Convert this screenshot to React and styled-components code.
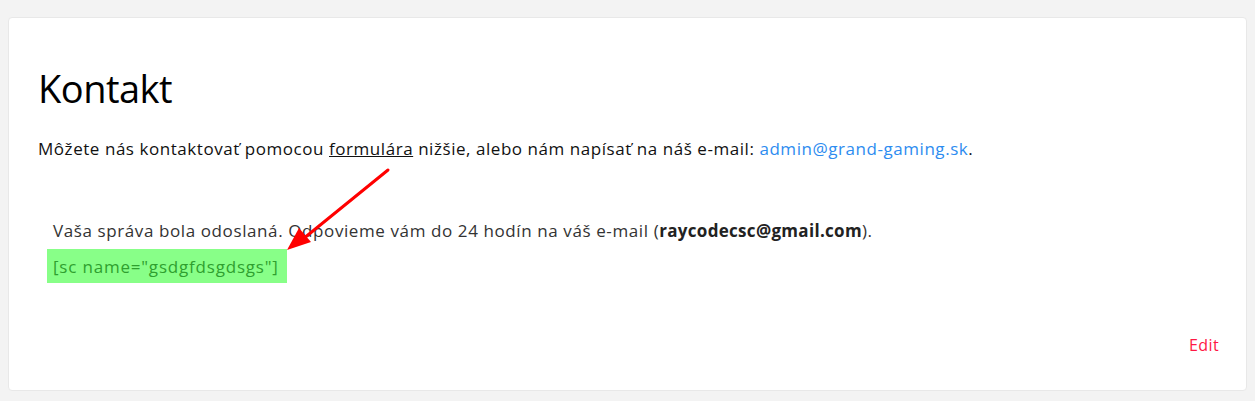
import React from "react";
import styled, { createGlobalStyle } from "styled-components";

const Global = createGlobalStyle`
  html, body { margin: 0; padding: 0; background: #f3f3f3; }
  body { font-family: "Open Sans", "Lato", sans-serif; }
`;

const Page = styled.div`
  padding: 17px 8px 10px 8px;
`;

const Card = styled.article`
  position: relative;
  background: #fff;
  border: 1px solid #e8e8e8;
  border-radius: 4px;
  height: 374px;
  box-sizing: border-box;
  padding: 44px 27px 0 29px;
  display: flex;
  flex-direction: column;
`;

const Title = styled.h1`
  margin: 0;
  font-family: "Open Sans", sans-serif;
  font-weight: 500;
  font-size: 38px;
  line-height: 52px;
  color: #000;
  letter-spacing: -0.5px;
`;

const Lead = styled.p`
  margin: 22px 0 0 0;
  font-size: 17px;
  line-height: 26px;
  color: #111;
  letter-spacing: 0.55px;
`;

const FormLink = styled.a`
  color: #111;
  text-decoration: underline;
`;

const MailLink = styled.a`
  color: #2d8cf0;
  text-decoration: none;
`;

const Notice = styled.div`
  margin-top: 56px;
  padding-left: 9px;
  display: flex;
  flex-direction: column;
  align-items: flex-start;
`;

const NoticeText = styled.p`
  margin: 0 0 0 6px;
  font-size: 17px;
  line-height: 26px;
  color: #333;
  letter-spacing: 0.6px;
  b { font-weight: 700; color: #222; letter-spacing: 0.3px; }
`;

const Shortcode = styled.div`
  margin-top: 5px;
  background: #88ff88;
  color: #2f9f2f;
  font-size: 17px;
  line-height: 33px;
  letter-spacing: 0.8px;
  padding: 1px 8px 0 6px;
`;

const Footer = styled.div`
  margin-top: auto;
  margin-bottom: 34px;
  display: flex;
  justify-content: flex-end;
`;

const EditLink = styled.a`
  color: #ff1744;
  font-size: 16px;
  letter-spacing: 0.4px;
  text-decoration: none;
`;

const Arrow = styled.svg`
  position: absolute;
  left: 0;
  top: 0;
  pointer-events: none;
`;

export default function App() {
  return (
    <>
      <Global />
      <Page>
        <Card>
          <Title>Kontakt</Title>
          <Lead>
            Môžete nás kontaktovať pomocou <FormLink href="#">formulára</FormLink> nižšie, alebo nám napísať na náš e-mail:{" "}
            <MailLink href="#">admin@grand-gaming.sk</MailLink>.
          </Lead>
          <Notice>
            <NoticeText>
              Vaša správa bola odoslaná. Odpovieme vám do 24 hodín na váš e-mail (<b>raycodecsc@gmail.com</b>).
            </NoticeText>
            <Shortcode>[sc name="gsdgfdsgdsgs"]</Shortcode>
          </Notice>
          <Footer>
            <EditLink href="#">Edit</EditLink>
          </Footer>
          <Arrow width="1239" height="374" viewBox="0 0 1239 374">
            <line x1="379" y1="152" x2="294" y2="221" stroke="#f00" strokeWidth="3" strokeLinecap="round" />
            <polygon points="278,232 290,210 302,224" fill="#f00" />
          </Arrow>
        </Card>
      </Page>
    </>
  );
}
